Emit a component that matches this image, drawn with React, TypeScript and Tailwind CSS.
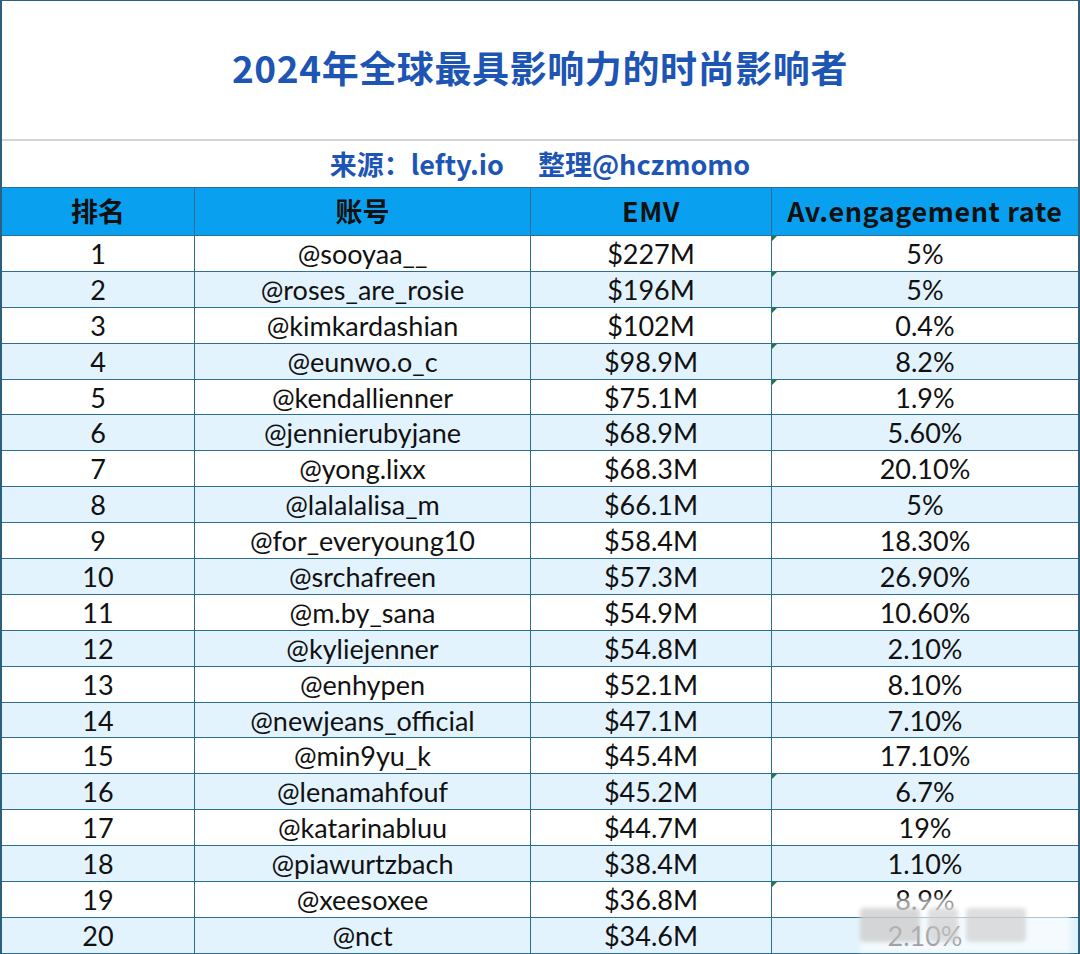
const rows: [string, string, string, boolean][] = [
  ['@sooyaa__', '$227M', '5%', true],
  ['@roses_are_rosie', '$196M', '5%', true],
  ['@kimkardashian', '$102M', '0.4%', true],
  ['@eunwo.o_c', '$98.9M', '8.2%', true],
  ['@kendallienner', '$75.1M', '1.9%', true],
  ['@jennierubyjane', '$68.9M', '5.60%', false],
  ['@yong.lixx', '$68.3M', '20.10%', false],
  ['@lalalalisa_m', '$66.1M', '5%', false],
  ['@for_everyoung10', '$58.4M', '18.30%', false],
  ['@srchafreen', '$57.3M', '26.90%', false],
  ['@m.by_sana', '$54.9M', '10.60%', false],
  ['@kyliejenner', '$54.8M', '2.10%', false],
  ['@enhypen', '$52.1M', '8.10%', false],
  ['@newjeans_official', '$47.1M', '7.10%', false],
  ['@min9yu_k', '$45.4M', '17.10%', false],
  ['@lenamahfouf', '$45.2M', '6.7%', true],
  ['@katarinabluu', '$44.7M', '19%', false],
  ['@piawurtzbach', '$38.4M', '1.10%', false],
  ['@xeesoxee', '$36.8M', '8.9%', true],
  ['@nct', '$34.6M', '2.10%', false],
]

export default function App() {
  return (
    <div className="relative w-[1080px] h-[954px] overflow-hidden bg-white font-['Noto_Sans_CJK_SC',sans-serif] text-[#111]">
      <div className="h-full border-l-2 border-r-2 border-t border-[#2b5f80]">
        <div className="h-[140px] flex items-center justify-center border-b-2 border-[#d4d4d4]">
          <h1 className="text-[37px] font-bold text-[#1d55b5] tracking-[0.6px] pb-1">
            2024年全球最具影响力的时尚影响者
          </h1>
        </div>
        <div className="h-[46px] flex items-center justify-center gap-[34px] text-[27px] font-bold text-[#1d55b5]">
          <span>来源：lefty.io</span>
          <span>整理@hczmomo</span>
        </div>
        <div className="grid grid-cols-[193px_336px_241px_1fr] h-[49px] bg-[#0aa0f0] border-y border-[#2b6f95] text-[27px] font-bold">
          <div className="flex items-center justify-center border-r border-[#2b6f95]">排名</div>
          <div className="flex items-center justify-center border-r border-[#2b6f95]">账号</div>
          <div className="flex items-center justify-center border-r border-[#2b6f95] tracking-[0.5px]">EMV</div>
          <div className="flex items-center justify-center tracking-[0.6px]">Av.engagement rate</div>
        </div>
        {rows.map(([acc, emv, rate, flag], i) => (
          <div
            key={acc}
            className={`grid grid-cols-[193px_336px_241px_1fr] h-[35.9px] border-b border-[#2b6f95] font-['Lato',sans-serif] text-[27px] leading-none ${i % 2 === 1 ? 'bg-[#e3f3fd]' : 'bg-white'}`}
          >
            <div className="flex items-center justify-center border-r border-[#2b6f95]">{i + 1}</div>
            <div className="flex items-center justify-center border-r border-[#2b6f95]">{acc}</div>
            <div className="flex items-center justify-center border-r border-[#2b6f95]">{emv}</div>
            <div className="relative flex items-center justify-center">
              {flag && (
                <span className="absolute left-0 top-0 w-0 h-0 border-t-[5px] border-r-[5px] border-t-[#1e7a3c] border-r-transparent" />
              )}
              {rate}
            </div>
          </div>
        ))}
      </div>
      <div className="absolute right-[10px] bottom-[2px] w-[210px] h-[54px] flex items-center gap-2 bg-white/60 blur-[2px]">
        <div className="w-[60px] h-[34px] bg-[#bdbdbd]/60 rounded" />
        <div className="w-[30px] h-[34px] bg-[#c8c8c8]/60 rounded" />
        <div className="w-[60px] h-[34px] bg-[#c8c8c8]/60 rounded" />
      </div>
    </div>
  )
}
